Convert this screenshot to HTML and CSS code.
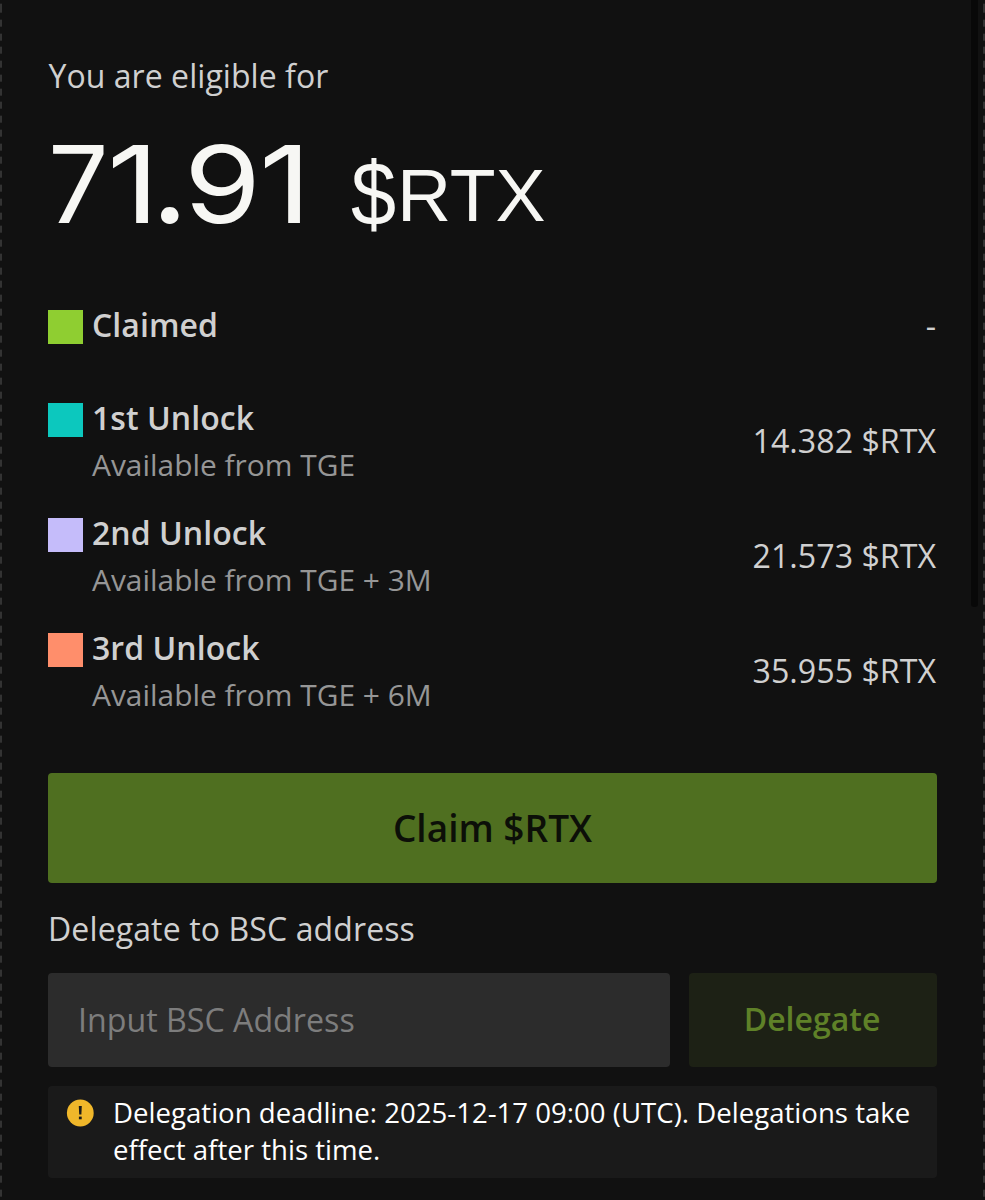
FILE: index.html
```html
<!DOCTYPE html>
<html lang="en">
<head>
  <meta charset="UTF-8" />
  <meta name="viewport" content="width=device-width, initial-scale=1.0"/>
  <title>Claim $RTX</title>
  <link rel="stylesheet" href="styles.css">
</head>
<body>
  <div class="panel">
    <p class="label eligible">You are eligible for</p>
    <div class="amount">
      <span class="number"><span class="d7">7</span><span class="d1">1</span><span class="dot">.</span><span class="d9">9</span><span class="d1">1</span></span>
      <span class="token"><span class="dollar">$</span>RTX</span>
    </div>

    <div class="unlocks">
      <div class="row claimed">
        <span class="swatch green"></span>
        <div class="info"><h3>Claimed</h3></div>
        <span class="value">-</span>
      </div>
      <div class="row">
        <span class="swatch teal"></span>
        <div class="info"><h3>1st Unlock</h3><p>Available from TGE</p></div>
        <span class="value">14.382 $RTX</span>
      </div>
      <div class="row">
        <span class="swatch purple"></span>
        <div class="info"><h3>2nd Unlock</h3><p>Available from TGE + 3M</p></div>
        <span class="value">21.573 $RTX</span>
      </div>
      <div class="row">
        <span class="swatch orange"></span>
        <div class="info"><h3>3rd Unlock</h3><p>Available from TGE + 6M</p></div>
        <span class="value">35.955 $RTX</span>
      </div>
    </div>

    <button class="claim-btn">Claim $RTX</button>

    <p class="label delegate-label">Delegate to BSC address</p>
    <div class="delegate-form">
      <input type="text" class="address" placeholder="Input BSC Address" />
      <button class="delegate-btn">Delegate</button>
    </div>

    <div class="notice">
      <svg class="notice-icon" width="28" height="28" viewBox="0 0 28 28">
        <circle cx="14.3" cy="14" r="13.4" fill="#f0b72a"/>
        <path d="M12.8 7h3l-.4 8.4h-2.2z" fill="#1a1a1a"/>
        <rect x="12.9" y="17.6" width="2.8" height="2.7" fill="#1a1a1a"/>
      </svg>
      <p>Delegation deadline: 2025-12-17 09:00 (UTC). Delegations take<br>effect after this time.</p>
    </div>
  </div>
  <div class="scrollbar"></div>
</body>
</html>
```

FILE: styles.css
```css
* {
  box-sizing: border-box;
}

body {
  margin: 0;
  height: 1200px;
  overflow: hidden;
  position: relative;
  background: #111111;
  color: #d0d0d0;
  font-family: "Open Sans", sans-serif;
}

/* dashed side borders */
body::before,
body::after {
  content: "";
  position: absolute;
  top: 0;
  left: 0;
  width: 2px;
  height: 1200px;
  background: repeating-linear-gradient(to bottom, #333 0, #333 7px, transparent 7px, transparent 13.77px);
  background-position: 0 5.7px;
}

body::after {
  left: auto;
  right: 0;
}

h3,
p {
  margin: 0;
}

.panel {
  width: 985px;
  padding: 54px 48px 0;
}

.label {
  font-size: 32px;
  line-height: 44px;
  letter-spacing: 0.05px;
}

.eligible {
  padding-left: 0.5px;
}

.amount {
  display: flex;
  align-items: baseline;
  height: 152px;
  margin-top: 30px;
  color: #f7f7f4;
}

.number {
  display: flex;
  align-items: baseline;
  width: 303px;
  font-family: Inter, sans-serif;
  font-size: 107px;
  line-height: 112px;
}

/* wide digits, each one in a fixed cell */
.d7 {
  width: 59px;
}

.d1 {
  width: 50px;
  transform: scaleX(1.2);
  transform-origin: 0 0;
}

.dot {
  width: 27px;
  font-family: Lato, sans-serif;
  font-weight: 900;
  line-height: 90px;
}

.d9 {
  width: 75px;
  transform: scaleX(1.16);
  transform-origin: 0 0;
}

.token {
  font-family: "Liberation Sans", Arial, sans-serif;
  font-size: 75px;
  line-height: 90px;
  transform: translateY(-2px);
}

.dollar {
  display: inline-block;
  width: 46px;
  transform: scale(1.08, 1.2);
  transform-origin: 0 55%;
}

.unlocks {
  margin-top: 21px;
}

.row {
  display: flex;
  height: 115px;
}

.row.claimed {
  height: 93px;
}

.swatch {
  width: 35px;
  height: 34px;
  margin: 9px 9px 0 0;
}

.green { background: #8fce31; }
.teal { background: #0cc8be; }
.purple { background: #c5bcfa; }
.orange { background: #ff8e6b; }

.info {
  flex: 1;
}

.info h3 {
  font-size: 32px;
  font-weight: 600;
  line-height: 48px;
  letter-spacing: 0.05px;
}

.info p {
  font-size: 29.9px;
  line-height: 46px;
  color: #969696;
}

.value {
  margin-right: 1px;
  padding-top: 1px;
  font-size: 32.2px;
  line-height: 92px;
}

.claimed .value {
  line-height: 48px;
}

button {
  display: block;
  padding: 0;
  border: none;
  border-radius: 4px;
  font-family: inherit;
  font-weight: 600;
  cursor: pointer;
}

.claim-btn {
  width: 889px;
  height: 110px;
  margin-top: 34px;
  padding-bottom: 2px;
  background: #4f6f20;
  color: #0c0f08;
  font-size: 37px;
}

.delegate-label {
  margin-top: 24px;
  letter-spacing: 0.12px;
}

.delegate-form {
  display: flex;
  gap: 19px;
  margin-top: 22px;
}

.address {
  width: 622px;
  height: 94px;
  padding: 0 30px 1px;
  border: none;
  border-radius: 4px;
  background: #2c2c2c;
  color: #fff;
  font-family: inherit;
  font-size: 32.2px;
}

.address::placeholder {
  color: #7d7d7d;
}

.delegate-btn {
  width: 248px;
  height: 94px;
  padding: 0 2px 4px 0;
  background: #1d2115;
  color: #5f8128;
  font-size: 32px;
}

.notice {
  display: flex;
  gap: 19px;
  width: 889px;
  height: 92px;
  margin-top: 19px;
  padding: 8px 18px 0;
  border-radius: 4px;
  background: #1a1a1a;
  color: #fff;
  font-size: 27.6px;
  line-height: 37px;
  white-space: nowrap;
}

.notice-icon {
  flex-shrink: 0;
  margin-top: 5px;
}

.scrollbar {
  position: absolute;
  top: 0;
  right: 7px;
  width: 7px;
  height: 607px;
  background: #080808;
  border-radius: 0 0 3px 3px;
}
```
